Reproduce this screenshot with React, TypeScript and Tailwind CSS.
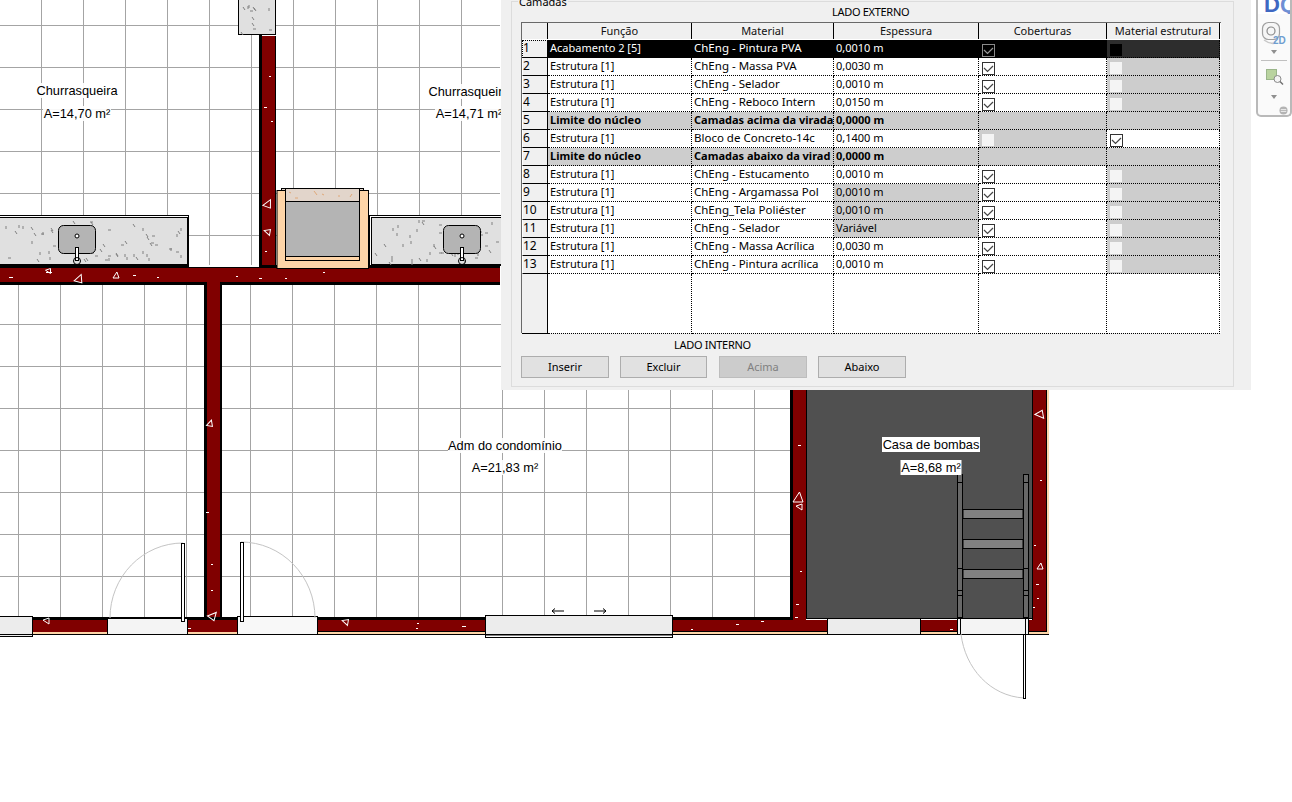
import React from "react";

type Cell = "w" | "g" | "k" | "d";

interface Layer {
  n: number;
  func: string;
  mat: string;
  thick: string;
  bold?: boolean;
  cells: [Cell, Cell, Cell];
  cob: "on" | "off" | "none";
  est: "on" | "off" | "none";
}

const layers: Layer[] = [
  { n: 1, func: "Acabamento 2 [5]", mat: "ChEng - Pintura PVA", thick: "0,0010 m", cells: ["k", "k", "d"], cob: "on", est: "off" },
  { n: 2, func: "Estrutura [1]", mat: "ChEng - Massa PVA", thick: "0,0030 m", cells: ["w", "w", "g"], cob: "on", est: "off" },
  { n: 3, func: "Estrutura [1]", mat: "ChEng - Selador", thick: "0,0010 m", cells: ["w", "w", "g"], cob: "on", est: "off" },
  { n: 4, func: "Estrutura [1]", mat: "ChEng - Reboco Intern", thick: "0,0150 m", cells: ["w", "w", "g"], cob: "on", est: "off" },
  { n: 5, func: "Limite do núcleo", mat: "Camadas acima da virada", thick: "0,0000 m", bold: true, cells: ["g", "g", "g"], cob: "none", est: "none" },
  { n: 6, func: "Estrutura [1]", mat: "Bloco de Concreto-14c", thick: "0,1400 m", cells: ["w", "g", "w"], cob: "off", est: "on" },
  { n: 7, func: "Limite do núcleo", mat: "Camadas abaixo da virad", thick: "0,0000 m", bold: true, cells: ["g", "g", "g"], cob: "none", est: "none" },
  { n: 8, func: "Estrutura [1]", mat: "ChEng - Estucamento", thick: "0,0010 m", cells: ["w", "w", "g"], cob: "on", est: "off" },
  { n: 9, func: "Estrutura [1]", mat: "ChEng - Argamassa Pol", thick: "0,0010 m", cells: ["g", "w", "g"], cob: "on", est: "off" },
  { n: 10, func: "Estrutura [1]", mat: "ChEng_Tela Poliéster", thick: "0,0010 m", cells: ["g", "w", "g"], cob: "on", est: "off" },
  { n: 11, func: "Estrutura [1]", mat: "ChEng - Selador", thick: "Variável", cells: ["g", "w", "g"], cob: "on", est: "off" },
  { n: 12, func: "Estrutura [1]", mat: "ChEng - Massa Acrílica", thick: "0,0030 m", cells: ["w", "w", "g"], cob: "on", est: "off" },
  { n: 13, func: "Estrutura [1]", mat: "ChEng - Pintura acrílica", thick: "0,0010 m", cells: ["w", "w", "g"], cob: "on", est: "off" },
];

const cellBg: Record<Cell, string> = {
  w: "bg-white text-black",
  g: "bg-[#cdcdcd] text-black",
  k: "bg-black text-white",
  d: "bg-[#2d2d2d] text-white",
};

const Check = ({ state, dark }: { state: "on" | "off"; dark?: boolean }) => {
  if (state === "off") {
    return <div className={`ml-[3px] mt-[4px] h-[12px] w-[12px] ${dark ? "bg-black" : "bg-[#f4f4f4]"}`} />;
  }
  return (
    <div className={`ml-[3px] mt-[4px] h-[13px] w-[13px] border ${dark ? "border-[#8a8a8a] bg-black" : "border-[#333333] bg-white"}`}>
      <svg viewBox="0 0 11 11" className="h-[11px] w-[11px]">
        <path d="M1 5 L4.5 8.5 L10 3" fill="none" stroke={dark ? "#9a9a9a" : "#444444"} strokeWidth="1.2" />
      </svg>
    </div>
  );
};

const Row = ({ row }: { row: Layer }) => {
  const boldCls = row.bold ? "font-bold" : "";
  return (
    <div className="flex h-[18px]">
      <div className={`h-[18px] w-[26px] border-b border-l border-r border-black border-l-white bg-[#f0f0f0] text-[12px] leading-[16px] text-black ${row.n === 1 ? "outline-1 -outline-offset-1 outline-dotted outline-black" : ""}`}>
        {row.n}
      </div>
      <div className={`h-[18px] w-[144px] overflow-hidden whitespace-nowrap border-b border-r border-dotted border-black pl-[2px] leading-[16px] ${boldCls} ${row.bold ? cellBg.g : row.n === 1 ? cellBg.k : cellBg.w}`}>
        {row.func}
      </div>
      <div className={`h-[18px] w-[142px] overflow-hidden whitespace-nowrap border-b border-r border-dotted border-black pl-[2px] leading-[16px] ${row.bold ? "font-bold" : "text-[11.5px]"} ${row.bold ? cellBg.g : row.n === 1 ? cellBg.k : cellBg.w}`}>
        {row.mat}
      </div>
      <div className={`h-[18px] w-[145px] overflow-hidden whitespace-nowrap border-b border-r border-dotted border-black pl-[2px] leading-[16px] ${boldCls} ${cellBg[row.cells[0]]}`}>
        {row.thick}
      </div>
      <div className={`h-[18px] w-[128px] border-b border-r border-dotted border-black ${cellBg[row.cells[1]]}`}>
        {row.cob !== "none" && <Check state={row.cob} dark={row.n === 1} />}
      </div>
      <div className={`h-[18px] w-[113px] border-b border-r border-dotted border-black ${cellBg[row.cells[2]]}`}>
        {row.est !== "none" && <Check state={row.est} dark={row.n === 1} />}
      </div>
    </div>
  );
};

const HeaderCell = ({ label, width }: { label: string; width: string }) => (
  <div className={`h-[16px] ${width} border-r border-black bg-[#f0f0f0] text-center leading-[16px] text-[#111111]`}>{label}</div>
);

const Btn = ({ label, width, disabled }: { label: string; width: string; disabled?: boolean }) => (
  <div
    className={`flex h-[22px] ${width} items-center justify-center border ${
      disabled ? "border-[#bdbdbd] bg-[#cccccc] text-[#808080]" : "border-[#adadad] bg-[#e1e1e1] text-black"
    }`}
  >
    {label}
  </div>
);

const LayersDialog = () => (
  <div className="absolute left-[501px] top-0 h-[390px] w-[750px] overflow-hidden bg-[#f0f0f0] pl-[10px] pt-[1px] font-['Noto_Sans',sans-serif] text-[11px] text-black">
    <div className="relative h-[386px] w-[723px] border border-[#dcdcdc] pl-[9px]">
      <div className="absolute left-[6px] top-[-8px] bg-[#f0f0f0] px-[1px] leading-[16px]">Camadas</div>
      <div className="h-[20px] pl-[311px] pt-[2px] leading-[16px] tracking-[-0.3px]">LADO EXTERNO</div>
      <div className="h-[311px] w-[700px] border-l border-t border-[#696969] bg-white">
        <div className="flex h-[17px] border-b border-white">
          <HeaderCell label="" width="w-[26px]" />
          <HeaderCell label="Função" width="w-[144px]" />
          <HeaderCell label="Material" width="w-[142px]" />
          <HeaderCell label="Espessura" width="w-[145px]" />
          <HeaderCell label="Coberturas" width="w-[128px]" />
          <HeaderCell label="Material estrutural" width="w-[113px]" />
        </div>
        {layers.map((row) => (
          <Row key={row.n} row={row} />
        ))}
        <div className="flex h-[60px]">
          <div className="w-[26px] border-b border-r border-black bg-[#f0f0f0]" />
          <div className="w-[144px] border-b border-r border-dotted border-black" />
          <div className="w-[142px] border-b border-r border-dotted border-black" />
          <div className="w-[145px] border-b border-r border-dotted border-black" />
          <div className="w-[128px] border-b border-r border-dotted border-black" />
          <div className="w-[113px] border-b border-r border-dotted border-black" />
        </div>
      </div>
      <div className="h-[23px] pl-[153px] pt-[4px] leading-[16px] tracking-[-0.3px]">LADO INTERNO</div>
      <div className="flex">
        <Btn label="Inserir" width="w-[88px]" />
        <div className="w-[11px]" />
        <Btn label="Excluir" width="w-[87px]" />
        <div className="w-[12px]" />
        <Btn label="Acima" width="w-[88px]" disabled />
        <div className="w-[11px]" />
        <Btn label="Abaixo" width="w-[88px]" />
      </div>
    </div>
  </div>
);

const NavBar = () => (
  <div className="absolute left-[1256px] top-0 flex h-[117px] w-[36px] flex-col overflow-hidden rounded-b-[5px] border-2 border-t-0 border-[#b9b9b9] bg-[#fafafa]">
    <div className="flex h-[14px] w-full shrink-0 overflow-hidden bg-white pl-[6px] font-['Liberation_Sans',sans-serif] text-[22px] font-bold leading-[10px] text-[#3f68c2]">
      <span>D</span>
      <span className="text-[#6f8fd4]">Q</span>
    </div>
    <svg viewBox="0 0 32 26" className="mt-[6px] h-[26px] w-[32px] shrink-0">
      <rect x="4.5" y="2.5" width="17" height="17" rx="6" fill="#f6f6f6" stroke="#a0a0a0" strokeWidth="1.2" />
      <circle cx="13" cy="11" r="4" fill="none" stroke="#8a8a8a" strokeWidth="1.2" />
      <path d="M6 20 C10 23 14 24 18 23" fill="none" stroke="#c8c8c8" strokeWidth="1.5" />
      <text x="15" y="24" fontSize="10" fontWeight="700" fill="#6f9ed0" fontFamily="'Liberation Sans', sans-serif">2D</text>
    </svg>
    <svg viewBox="0 0 6 4" className="ml-[13px] mt-[4px] h-[4px] w-[6px] shrink-0">
      <path d="M0 0 H6 L3 4 Z" fill="#8f8f8f" />
    </svg>
    <div className="ml-[3px] mt-[6px] h-px w-[26px] shrink-0 bg-[#c0c0c0]" />
    <svg viewBox="0 0 32 24" className="mt-[7px] h-[24px] w-[32px] shrink-0">
      <rect x="8.5" y="1.5" width="10" height="10" fill="#b9d39f" stroke="#9ab58a" />
      <circle cx="19.5" cy="11" r="3.5" fill="#f4f4f4" stroke="#8a8a8a" />
      <path d="M22 13.5 L25 16.5" stroke="#6f6f6f" strokeWidth="1.4" />
    </svg>
    <svg viewBox="0 0 6 4" className="ml-[13px] mt-[3px] h-[4px] w-[6px] shrink-0">
      <path d="M0 0 H6 L3 4 Z" fill="#8f8f8f" />
    </svg>
    <svg viewBox="0 0 10 10" className="ml-[21px] mt-[7px] h-[9px] w-[9px] shrink-0">
      <circle cx="5" cy="5" r="4.5" fill="#b4b4b4" />
      <rect x="2" y="3.5" width="6" height="1" fill="#f0f0f0" />
      <rect x="2" y="5.5" width="6" height="1" fill="#f0f0f0" />
    </svg>
  </div>
);

// speckles of the concrete hatch, same on every render
const speckle = (x: number, y: number, w: number, h: number, count: number, seed: number) => {
  let s = seed;
  const next = () => {
    s = (s * 9301 + 49297) % 233280;
    return s / 233280;
  };
  const out: string[] = [];
  for (let i = 0; i < count; i++) {
    const px = Math.round(x + next() * w);
    const py = Math.round(y + next() * h);
    const kind = Math.floor(next() * 3);
    if (kind === 0) out.push(`M${px} ${py}h3`);
    else if (kind === 1) out.push(`M${px} ${py}l2 3`);
    else out.push(`M${px} ${py}v3`);
  }
  return out.join("");
};

// x, y, rotation, size of the open triangles in the masonry hatch
const tris: [number, number, number, number][] = [
  [268, 203, 20, 4], [267, 232, -80, 3], [79, 278, 15, 4], [116, 275, 0, 3], [48, 271, -90, 2.5], [46, 621, -90, 3],
  [213, 615, 35, 4], [345, 622, -80, 3], [210, 423, 10, 3], [798, 497, 0, 5], [799, 507, -90, 3],
  [1039, 415, -100, 4], [1040, 566, 0, 3],
];
const dashes: [number, number, number][] = [
  [9, 277, 4], [46, 272, 6], [133, 275, 3], [157, 277, 2], [236, 276, 2], [259, 278, 3], [285, 278, 2], [323, 272, 2],
  [264, 107, 3], [269, 76, 2], [271, 121, 2], [265, 251, 2], [206, 512, 3], [211, 564, 2], [211, 590, 2],
  [188, 628, 3], [462, 626, 4], [736, 624, 3], [761, 621, 3], [691, 629, 2], [416, 628, 2], [417, 623, 2], [798, 445, 3],
  [800, 571, 2], [796, 604, 3], [1040, 480, 2], [1034, 545, 2], [1036, 584, 3], [1037, 598, 2], [1033, 607, 2],
  [950, 629, 3], [926, 619, 1], [795, 617, 3],
];

const Lines = ({ d, stroke = "#000", w = 1 }: { d: string; stroke?: string; w?: number }) => (
  <path d={d} fill="none" stroke={stroke} strokeWidth={w} shapeRendering="crispEdges" />
);

const Sink = ({ x, cx }: { x: number; cx: number }) => (
  <g>
    <rect x={x + 0.5} y="225.5" width="37" height="28" rx="5" fill="#b4b4b4" stroke="#000" />
    <circle cx={cx} cy="236" r="2" fill="#fff" stroke="#000" />
    <rect x={cx - 1.5} y="247.5" width="3" height="13" fill="#fff" stroke="#000" />
    <circle cx={cx} cy="261" r="3.5" fill="none" stroke="#000" />
  </g>
);

const Label = ({ x, y, text, w, box }: { x: number; y: number; text: string; w: number; box?: boolean }) => (
  <g>
    <rect x={x - w / 2} y={y - 12} width={w} height="15" fill="#fff" opacity={box ? 1 : 0.92} />
    <text x={x} y={y} textAnchor="middle" fontSize="12.8" fill="#000" fontFamily="'Liberation Sans', sans-serif">
      {text}
    </text>
  </g>
);

const topV = [41, 83, 125, 167, 209, 251, 293, 335, 377, 419, 461];
const topH = [25, 67, 109, 151, 193, 235];
const lowV = [18, 60, 102, 144, 186, 250, 292, 334, 376, 418, 460, 502, 544, 586, 628, 670, 712, 754];
const lowH = [324, 366, 408, 450, 492, 534, 576];

const FloorPlan = () => (
  <svg viewBox="0 0 1292 802" className="absolute left-0 top-0 h-[802px] w-[1292px]">
    {/* tile grid */}
    <g>
      {topV.map((x) => (
        <Lines key={`tv${x}`} d={`M${x + 0.5} 0V268`} stroke="#a4a4a4" />
      ))}
      {topH.map((y) => (
        <Lines key={`th${y}`} d={`M0 ${y + 0.5}H500`} stroke="#a4a4a4" />
      ))}
      {lowV.map((x) => (
        <Lines key={`lv${x}`} d={`M${x + 0.5} 284V618`} stroke="#a4a4a4" />
      ))}
      {lowH.map((y) => (
        <Lines key={`lh${y}`} d={`M0 ${y + 0.5}H790`} stroke="#a4a4a4" />
      ))}
    </g>

    {/* top walls */}
    <rect x="259" y="36" width="17" height="232" fill="#fff" />
    <rect x="259" y="34" width="3" height="234" fill="#000" />
    <rect x="262" y="36" width="13" height="232" fill="#800000" />
    <rect x="275" y="36" width="1" height="232" fill="#000" />
    <rect x="0" y="265" width="500" height="3" fill="#000" />
    <rect x="189" y="265" width="70" height="3" fill="#fff" />
    <Lines d="M189 267.5H259" />
    <rect x="0" y="268" width="500" height="14" fill="#800000" />
    <rect x="0" y="282" width="204" height="3" fill="#000" />
    <rect x="219" y="282" width="281" height="3" fill="#000" />

    {/* top-middle concrete column */}
    <rect x="238.5" y="-2" width="37" height="36.5" fill="#e0e0e0" stroke="#000" />
    <path d={speckle(240, 2, 33, 30, 12, 17)} stroke="#808080" fill="none" />

    {/* counters */}
    <rect x="-2" y="215.5" width="190.5" height="50" fill="#fff" stroke="#000" />
    <rect x="-2" y="217.5" width="189.5" height="47" fill="#e0e0e0" stroke="#000" />
    <path d={speckle(2, 220, 182, 42, 66, 5)} stroke="#808080" fill="none" />
    <rect x="369.5" y="215.5" width="140" height="50" fill="#fff" stroke="#000" />
    <rect x="371.5" y="217.5" width="140" height="47" fill="#e0e0e0" stroke="#000" />
    <path d={speckle(374, 220, 124, 42, 46, 91)} stroke="#808080" fill="none" />
    <Sink x={58} cx={77} />
    <Sink x={443} cx={462} />

    {/* barbecue */}
    <rect x="281.5" y="188.5" width="82" height="4" fill="#e2d5cb" stroke="#000" />
    <rect x="277" y="190.5" width="91.5" height="78" fill="#fed5a8" stroke="#000" />
    <rect x="285.5" y="188.5" width="74" height="72" fill="#fed5a8" stroke="#000" />
    <rect x="286" y="189" width="73" height="13" fill="#e2d5cb" />
    <Lines d="M285 201.5H360M285 256.5H360" />
    <rect x="286" y="202" width="73" height="54" fill="#b4b4b4" />
    <path d="M289 192l2 1M295 198h3M314 191l3 4M322 194l2 1M338 196h2M352 194l-2 3" stroke="#e0a878" fill="none" />

    {/* inner wall */}
    <rect x="204" y="282" width="3" height="335" fill="#000" />
    <rect x="207" y="282" width="13" height="338" fill="#800000" />
    <rect x="220" y="285" width="2" height="332" fill="#000" />

    {/* dark room */}
    <rect x="806" y="380" width="226" height="238" fill="#505050" />
    <rect x="790" y="380" width="3" height="238" fill="#000" />
    <rect x="793" y="380" width="13" height="240" fill="#800000" />
    <rect x="806" y="380" width="1" height="238" fill="#000" />
    <rect x="1032" y="0" width="1" height="634" fill="#000" />
    <rect x="1033" y="0" width="13" height="632" fill="#800000" />
    <rect x="1046" y="0" width="1" height="634" fill="#000" />
    <rect x="1047" y="0" width="2" height="634" fill="#fed5a8" />

    {/* bottom wall */}
    <rect x="0" y="617" width="793" height="3" fill="#000" />
    <rect x="806" y="618" width="227" height="1" fill="#000" />
    <rect x="0" y="620" width="1046" height="12" fill="#800000" />
    <rect x="793" y="617" width="13" height="4" fill="#800000" />
    <rect x="318" y="631" width="729" height="1" fill="#000" />
    <rect x="0" y="632" width="1047" height="2" fill="#fed5a8" />
    <rect x="0" y="634" width="1049" height="1" fill="#000" />

    {/* openings */}
    <rect x="-2" y="616.5" width="34.5" height="20" fill="#ececec" stroke="#000" />
    <Lines d="M0 634.5H33" />
    <rect x="107.5" y="618.5" width="80" height="16" fill="#f4f4f4" stroke="#000" />
    <rect x="237.5" y="616.5" width="80" height="18" fill="#f8f8f8" stroke="#000" />
    <rect x="485.5" y="615.5" width="187" height="22" fill="#fff" stroke="#000" />
    <rect x="486" y="616" width="186" height="18" fill="#ececec" />
    <rect x="485" y="634" width="188" height="1.5" fill="#000" />
    <rect x="827.5" y="618.5" width="93" height="16" fill="#ececec" stroke="#000" />
    <rect x="957.5" y="618.5" width="71" height="16" fill="#f4f4f4" stroke="#000" />
    <Lines d="M960.5 618V634M1025.5 618V634" />

    {/* sliding arrows */}
    <path d="M552 611H564M555 608.5L552 611L555 613.5M594 611H606M603 608.5L606 611L603 613.5" stroke="#000" fill="none" />

    {/* door swings */}
    <path d="M110 618A73 75 0 0 1 183 543M241 542A74 76 0 0 1 315 618M961 634C965 668 990 696 1024 698" fill="none" stroke="#c4c4c4" />
    <rect x="181.5" y="543.5" width="3" height="78" fill="#fff" stroke="#000" />
    <rect x="240.5" y="542.5" width="3" height="79" fill="#fff" stroke="#000" />
    <rect x="1023.5" y="634.5" width="2" height="64" fill="#fff" stroke="#000" />

    {/* stairs */}
    <rect x="963" y="509.5" width="60" height="9" fill="#808080" stroke="#000" />
    <rect x="963" y="539.5" width="60" height="9" fill="#808080" stroke="#000" />
    <rect x="963" y="569.5" width="60" height="9" fill="#808080" stroke="#000" />
    <rect x="957.5" y="474.5" width="5" height="143" fill="#686868" stroke="#000" />
    <rect x="1023.5" y="474.5" width="5" height="143" fill="#686868" stroke="#000" />
    <Lines d="M957 568.5H963M1023 568.5H1029M957 595.5H963M1023 595.5H1029M957 590.5H963M1023 590.5H1029M957 482.5H963M1023 482.5H1029" />

    {/* hatch of the walls */}
    {tris.map(([x, y, rot, s]) => (
      <path
        key={`t${x}-${y}`}
        d={`M${-s} ${s}L${s * 0.3} ${-s}L${s} ${s}Z`}
        transform={`translate(${x} ${y}) rotate(${rot})`}
        fill="none"
        stroke="#fff"
      />
    ))}
    {dashes.map(([x, y, l]) => (
      <Lines key={`d${x}-${y}`} d={`M${x} ${y + 0.5}h${l}`} stroke="#fff" />
    ))}

    {/* room labels */}
    <Label x={77} y={95} text="Churrasqueira" w={84} />
    <Label x={77} y={118} text="A=14,70 m²" w={68} />
    <Label x={469} y={96} text="Churrasqueira" w={84} />
    <Label x={469} y={118} text="A=14,71 m²" w={68} />
    <Label x={505} y={450} text="Adm do condomínio" w={114} />
    <Label x={505} y={472} text="A=21,83 m²" w={68} />
    <Label x={931} y={449} text="Casa de bombas" w={98} box />
    <Label x={931} y={472} text="A=8,68 m²" w={61} box />
  </svg>
);

export default function App() {
  return (
    <div className="relative h-[802px] w-[1292px] overflow-hidden bg-white">
      <FloorPlan />
      <LayersDialog />
      <NavBar />
    </div>
  );
}
